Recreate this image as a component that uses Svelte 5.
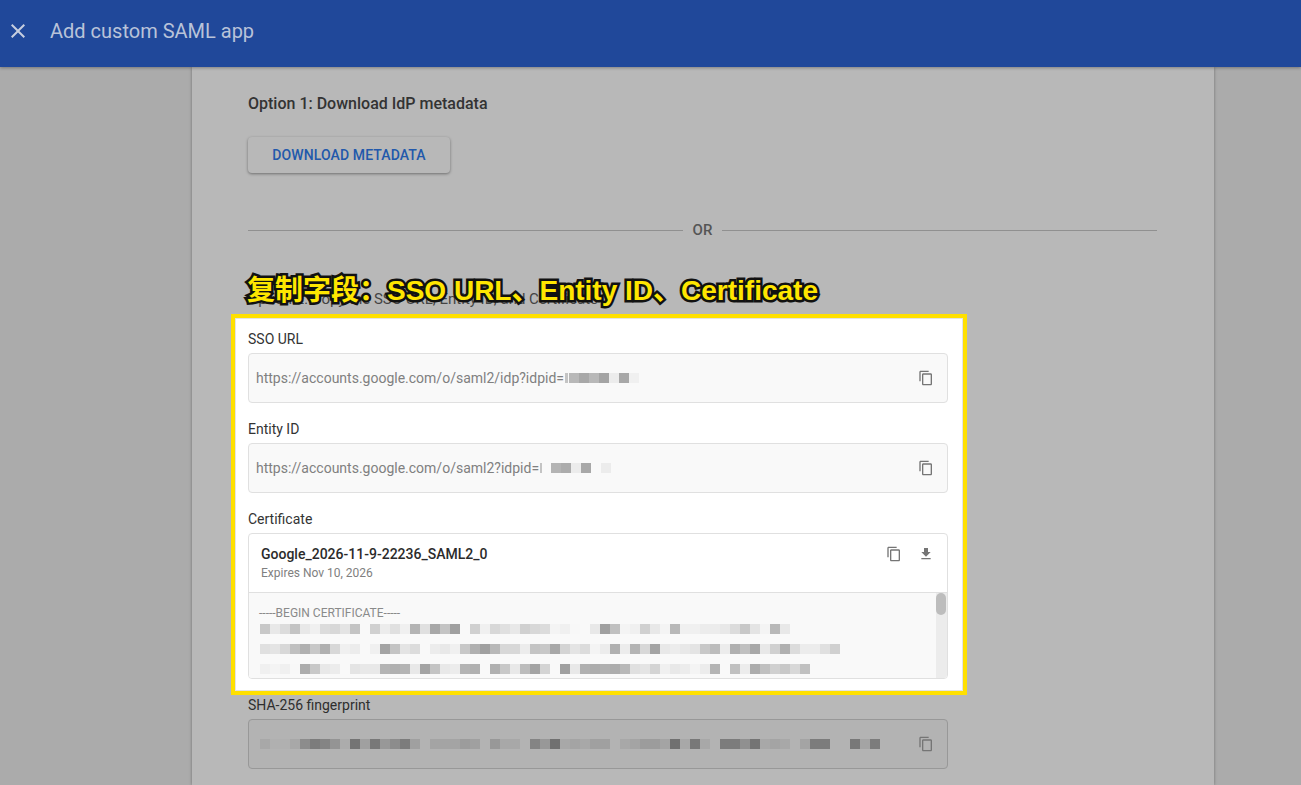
<script lang="ts">
  // pixelated (redacted) strings: one two-digit hex grey per 10px cell, ".." = gap
  const certRows = [
    "c8e8dcc4e8f0dcd8e4c4..d0ece0f0b4e0a8c4a0..d0f0d8e0e8d0d8dcf4f0f8..e8a0c0f4f0d0e8f4b8f0f0ececE8dcc8e4f4b8e8",
    "e0e4d8c0b0c8b0d8f0ec..f0a4c4e4dc..ece8f0c8b0a0b8d8d8ecc4c8a8d4e4dcf4ecb0ecb4d8a4e8ece8e4c8bcecb0c0a8e8d0b0dcecece0d0",
    "f0f4f0f8acc8e8ec..e4e8e8b4b0b4e8a4c4e8ecb4b0..b0c8e8bca4d4..a0e8b0acb0acb8e0e4d4f0e8ecf4ecb4..c0ecacc0d0c8d8c0",
  ];
  const fingerprint =
    "a8b0b0a88c7c8494ac74a078988c7ca0..a4a4a49ca0..98a8a8..849870a8a4a8a0a0..a8a49c9ca470a878a8..7c7c9074a8a4a8..a47c7c....78a47c";
  const ssoMask = "b8a8b8a4eca8f0";
  const entityMask = "b4aceca8..ec";

  function cells(row: string) {
    const out: (string | null)[] = [];
    for (let i = 0; i < row.length; i += 2) {
      const v = row.slice(i, i + 2);
      out.push(v === ".." ? null : `#${v}${v}${v}`);
    }
    return out;
  }
</script>

{#snippet copyIcon()}
  <svg class="icon" viewBox="0 0 24 24" width="16" height="16">
    <path d="M16 1H4c-1.1 0-2 .9-2 2v14h2V3h12V1zm3 4H8c-1.1 0-2 .9-2 2v14c0 1.1.9 2 2 2h11c1.1 0 2-.9 2-2V7c0-1.1-.9-2-2-2zm0 16H8V7h11v14z" />
  </svg>
{/snippet}

{#snippet blur(row: string)}
  <span class="blur">
    {#each cells(row) as c}
      <i style={c ? `background:${c}` : ""}></i>
    {/each}
  </span>
{/snippet}

<div class="page">
  <header class="topbar">
    <svg class="close" viewBox="0 0 24 24" width="24" height="24">
      <path d="M19 6.41L17.59 5 12 10.59 6.41 5 5 6.41 10.59 12 5 17.59 6.41 19 12 13.41 17.59 19 19 17.59 13.41 12z" />
    </svg>
    <h1>Add custom SAML app</h1>
  </header>

  <main class="sheet">
    <h2>Option 1: Download IdP metadata</h2>
    <button type="button" class="download">DOWNLOAD METADATA</button>

    <div class="or"><span>OR</span></div>

    <div class="highlight-wrap">
      <h2 class="copy-title">Option 2: Copy the SSO URL, Entity ID, and Certificate</h2>
      <div class="callout">复制字段：SSO URL、Entity ID、Certificate</div>

      <section class="highlight">
        <div class="label">SSO URL</div>
        <div class="field">
          <span class="url">https://accounts.google.com/o/saml2/idp?idpid=</span>
          <span class="sliver sso"></span>
          {@render blur(ssoMask)}
          <span class="action">{@render copyIcon()}</span>
        </div>

        <div class="label next">Entity ID</div>
        <div class="field">
          <span class="url">https://accounts.google.com/o/saml2?idpid=</span>
          <span class="sliver entity"></span>
          {@render blur(entityMask)}
          <span class="action">{@render copyIcon()}</span>
        </div>

        <div class="label next">Certificate</div>
        <div class="cert">
          <div class="cert-head">
            <div>
              <div class="cert-name">Google_2026-11-9-22236_SAML2_0</div>
              <div class="cert-exp">Expires Nov 10, 2026</div>
            </div>
            <div class="cert-actions">
              {@render copyIcon()}
              <svg class="icon" viewBox="0 0 24 24" width="16" height="16">
                <path d="M19 9h-4V3H9v6H5l7 7 7-7zM5 18v2h14v-2H5z" />
              </svg>
            </div>
          </div>
          <div class="cert-body">
            <div class="cert-text">
              <div class="begin">-----BEGIN CERTIFICATE-----</div>
              {#each certRows as row}
                <div class="cert-row">{@render blur(row.toLowerCase())}</div>
              {/each}
            </div>
            <div class="scrollbar"><div class="thumb"></div></div>
          </div>
        </div>
      </section>
    </div>

    <div class="label sha">SHA-256 fingerprint</div>
    <div class="field dim">
      {@render blur(fingerprint)}
      <span class="action">{@render copyIcon()}</span>
    </div>
  </main>
</div>

<style>
  :global(body) {
    margin: 0;
    background: #ababab;
    font-family: Roboto, "Liberation Sans", sans-serif;
  }

  .page {
    height: 785px;
    overflow: hidden;
    background: #ababab;
  }

  .topbar {
    position: relative;
    z-index: 2;
    height: 67px;
    box-sizing: border-box;
    padding: 0 0 5px 6px;
    display: flex;
    align-items: center;
    background: #20489a;
    box-shadow: 0 1px 3px rgba(0, 0, 0, 0.3);
  }

  .close {
    fill: #c6cedf;
  }

  h1 {
    margin: 0 0 0 20px;
    font-size: 20px;
    font-weight: 400;
    color: #b9c3d9;
  }

  .sheet {
    width: 1022px;
    height: 718px;
    box-sizing: border-box;
    margin-left: 192px;
    padding: 27px 57px 0 56px;
    background: #b8b8b8;
    box-shadow: 0 0 3px rgba(0, 0, 0, 0.35);
  }

  h2 {
    margin: 0;
    font-size: 16px;
    line-height: 20px;
    font-weight: 500;
    color: #333;
  }

  .download {
    display: block;
    width: 202px;
    height: 36px;
    margin-top: 23px;
    padding: 0;
    border: 0;
    border-radius: 4px;
    background: #b8b8b8;
    box-shadow: 0 1px 3px rgba(0, 0, 0, 0.4);
    font: 500 14px Roboto, sans-serif;
    letter-spacing: 0.1px;
    color: #2258ab;
  }

  .or {
    display: flex;
    align-items: center;
    gap: 10px;
    margin-top: 47px;
    height: 20px;
    font-size: 15px;
    font-weight: 500;
    color: #555;
  }

  .or::before,
  .or::after {
    content: "";
    flex: 1;
    height: 1px;
    background: #909090;
  }

  .highlight-wrap {
    position: relative;
    margin-top: 48px;
  }

  .copy-title {
    font-weight: 400;
    font-size: 15px;
    line-height: 22px;
    color: #444;
  }

  .callout {
    position: absolute;
    left: -1px;
    top: -20px;
    white-space: nowrap;
    font: 700 28px "Liberation Sans", "Noto Sans CJK SC", sans-serif;
    color: #ffe600;
    -webkit-text-stroke: 5px #111;
    paint-order: stroke fill;
  }

  .highlight {
    box-sizing: border-box;
    width: 736px;
    height: 381px;
    margin: 4px 0 0 -17px;
    padding: 14px 15px 0 13px;
    border: 4px solid #ffe000;
    background: #fff;
    box-shadow: inset 0 0 0 1px #e4e4e4;
  }

  .label {
    font-size: 14px;
    line-height: 15px;
    color: #333;
  }

  .next {
    margin-top: 19px;
  }

  .field {
    display: flex;
    align-items: center;
    box-sizing: border-box;
    width: 700px;
    height: 50px;
    margin-top: 6px;
    padding: 0 13px 0 7px;
    border: 1px solid #e0e0e0;
    border-radius: 4px;
    background: #f9f9f9;
  }

  .url {
    font-size: 14px;
    color: #808080;
    white-space: nowrap;
  }

  /* half-hidden first character next to the redacted cells */
  .sliver {
    flex: none;
    height: 10px;
    background: #c4c4c4;
  }

  .sliver.sso {
    width: 3px;
    margin: 0 1px 0 1px;
  }

  .sliver.entity {
    width: 2px;
    margin: 0 9px 0 1px;
  }

  .action {
    margin-left: auto;
    display: flex;
  }

  .icon {
    display: block;
    fill: #757575;
  }

  .blur {
    display: flex;
  }

  .blur i {
    display: block;
    flex: none;
    width: 10px;
    height: 10px;
  }

  .cert {
    box-sizing: border-box;
    width: 700px;
    height: 146px;
    margin-top: 6px;
    border: 1px solid #e0e0e0;
    border-radius: 4px;
    overflow: hidden;
  }

  .cert-head {
    display: flex;
    justify-content: space-between;
    box-sizing: border-box;
    height: 59px;
    padding: 12px 13px 0 12px;
    border-bottom: 1px solid #e0e0e0;
  }

  .cert-name {
    font-size: 14px;
    line-height: 17px;
    font-weight: 500;
    color: #2b2b2b;
  }

  .cert-exp {
    margin-top: 3px;
    font-size: 12px;
    line-height: 15px;
    color: #808080;
  }

  .cert-actions {
    display: flex;
    gap: 16px;
  }

  .cert-body {
    display: flex;
    height: 86px;
    background: #f9f9f9;
  }

  .cert-text {
    flex: 1;
    padding: 13px 0 0 10px;
  }

  .begin {
    font-size: 12px;
    line-height: 15px;
    margin-bottom: 3px;
    color: #8a8a8a;
  }

  .cert-row {
    margin: 0 0 10px 1px;
  }

  .scrollbar {
    width: 11px;
    background: #ececec;
  }

  .thumb {
    width: 10px;
    height: 22px;
    border-radius: 5px;
    background: #bdbdbd;
  }

  .sha {
    margin-top: 3px;
    color: #2e2e2e;
  }

  .field.dim {
    border-color: #989898;
    background: #b3b3b3;
    padding-left: 11px;
  }
</style>
